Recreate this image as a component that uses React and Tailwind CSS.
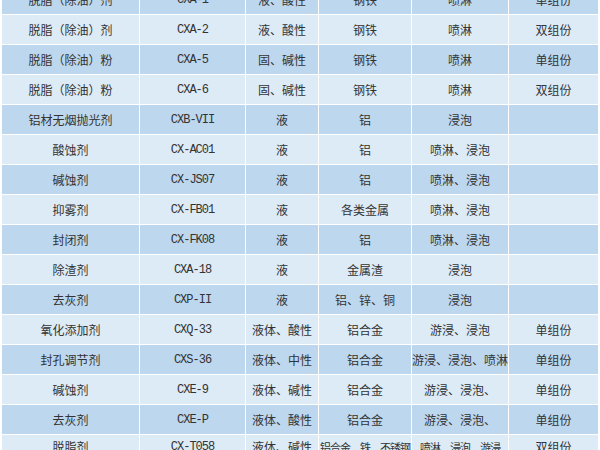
const rows = [
    ["脱脂（除油）剂", "CXA-1", "液、酸性", "钢铁", "喷淋", "单组份"],
    ["脱脂（除油）剂", "CXA-2", "液、酸性", "钢铁", "喷淋", "双组份"],
    ["脱脂（除油）粉", "CXA-5", "固、碱性", "钢铁", "喷淋", "单组份"],
    ["脱脂（除油）粉", "CXA-6", "固、碱性", "钢铁", "喷淋", "双组份"],
    ["铝材无烟抛光剂", "CXB-VII", "液", "铝", "浸泡", ""],
    ["酸蚀剂", "CX-AC01", "液", "铝", "喷淋、浸泡", ""],
    ["碱蚀剂", "CX-JS07", "液", "铝", "喷淋、浸泡", ""],
    ["抑雾剂", "CX-FB01", "液", "各类金属", "喷淋、浸泡", ""],
    ["封闭剂", "CX-FK08", "液", "铝", "喷淋、浸泡", ""],
    ["除渣剂", "CXA-18", "液", "金属渣", "浸泡", ""],
    ["去灰剂", "CXP-II", "液", "铝、锌、铜", "浸泡", ""],
    ["氧化添加剂", "CXQ-33", "液体、酸性", "铝合金", "游浸、浸泡", "单组份"],
    ["封孔调节剂", "CXS-36", "液体、中性", "铝合金", "游浸、浸泡、喷淋", "单组份"],
    ["碱蚀剂", "CXE-9", "液体、碱性", "铝合金", "游浸、浸泡、", "单组份"],
    ["去灰剂", "CXE-P", "液体、酸性", "铝合金", "游浸、浸泡、", "单组份"],
    ["脱脂剂", "CX-T058", "液体、碱性", "铝合金、铁、不锈钢", "喷淋、浸泡、游浸", "双组份"],
];

const widths = ["w-[138px]", "w-[106px]", "w-[73px]", "w-[93px]", "w-[97px]", "w-[90px]"];

export default function App() {
    return (
        <div className="w-[600px] h-[450px] overflow-hidden bg-white">
            {/* first row is cut off at the top of the shot */}
            <table
                className="-mt-[16px] ml-[1px] table-fixed border-collapse text-[12px] text-[#333]"
                style={{ fontFamily: '"Noto Sans CJK SC", sans-serif' }}
            >
                <colgroup>
                    {widths.map((w, i) => (
                        <col key={i} className={w} />
                    ))}
                </colgroup>
                <tbody>
                    {rows.map((r, i) => {
                        const last = i === rows.length - 1;
                        return (
                            <tr key={i} className={i % 2 === 0 ? "bg-[#bdd7ee]" : "bg-[#ddebf7]"}>
                                {r.map((c, j) => (
                                    <td
                                        key={j}
                                        className={[
                                            "border border-white text-center leading-[16px] p-0 whitespace-nowrap overflow-hidden",
                                            last ? "h-[46px] align-top pt-[4px]" : "h-[30px] align-middle",
                                            j === 1 ? "font-[family-name:'Liberation_Mono',monospace] tracking-[-1px]" : "",
                                            last && (j === 3 || j === 4) ? "text-[11px] tracking-[-1px]" : "",
                                        ].join(" ")}
                                    >
                                        {c}
                                    </td>
                                ))}
                            </tr>
                        );
                    })}
                </tbody>
            </table>
        </div>
    );
}
